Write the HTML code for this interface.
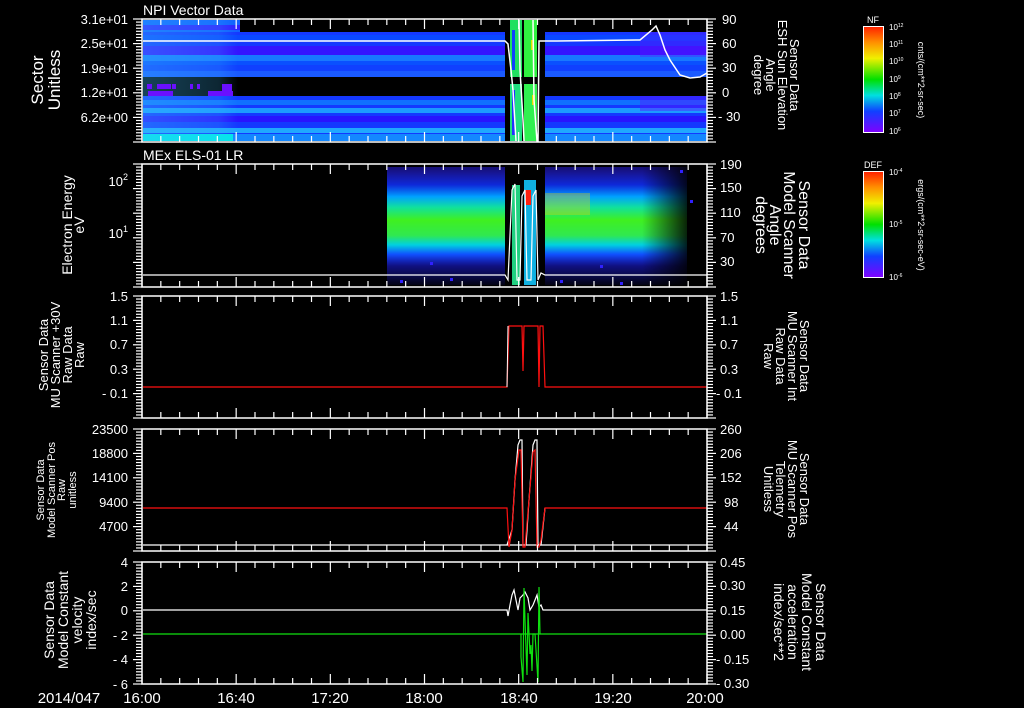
<!DOCTYPE html>
<html><head><meta charset="utf-8"><style>
html,body{margin:0;padding:0;background:#000;}
svg{display:block}
text{font-family:"Liberation Sans",sans-serif;fill:#fff;}
</style></head><body>
<svg width="1024" height="708" viewBox="0 0 1024 708" xmlns="http://www.w3.org/2000/svg">
<defs>
<linearGradient id="nf" x1="0" y1="0" x2="0" y2="1">
<stop offset="0" stop-color="#ff2000"/><stop offset="0.15" stop-color="#ff9000"/><stop offset="0.3" stop-color="#f0f000"/><stop offset="0.5" stop-color="#00e000"/><stop offset="0.65" stop-color="#00e0e0"/><stop offset="0.8" stop-color="#1040ff"/><stop offset="1" stop-color="#8000ff"/>
</linearGradient>
<linearGradient id="els" x1="0" y1="0" x2="0" y2="1">
<stop offset="0" stop-color="#3020ff" stop-opacity="0.45"/><stop offset="0.15" stop-color="#1030ff" stop-opacity="0.85"/><stop offset="0.25" stop-color="#00a0ff"/><stop offset="0.34" stop-color="#10e0a0"/><stop offset="0.45" stop-color="#40f020"/><stop offset="0.58" stop-color="#30e850"/><stop offset="0.66" stop-color="#00d0e0"/><stop offset="0.74" stop-color="#1050ff"/><stop offset="0.84" stop-color="#2020ff" stop-opacity="0.5"/><stop offset="1" stop-color="#2020ff" stop-opacity="0.08"/>
</linearGradient>
<linearGradient id="fadeR" x1="0" y1="0" x2="1" y2="0">
<stop offset="0" stop-color="#000" stop-opacity="0"/><stop offset="0.85" stop-color="#000" stop-opacity="0"/><stop offset="1" stop-color="#000" stop-opacity="0.85"/>
</linearGradient>
<linearGradient id="leftlite" x1="0" y1="0" x2="1" y2="0">
<stop offset="0" stop-color="#40c0ff" stop-opacity="0.35"/><stop offset="0.8" stop-color="#40c0ff" stop-opacity="0.2"/><stop offset="1" stop-color="#40c0ff" stop-opacity="0"/>
</linearGradient>
</defs>

<!-- PANEL 1 data -->
<g>
<rect x="143" y="20" width="97" height="12" fill="#1060ff"/>
<rect x="143" y="25" width="97" height="5" fill="#3020ff"/>
<rect x="143" y="32" width="564" height="45" fill="#1438ff"/>
<rect x="143" y="35" width="564" height="6" fill="#0a48ff"/>
<rect x="143" y="46" width="564" height="9" fill="#3414ff"/>
<rect x="143" y="55" width="564" height="6" fill="#1878ff"/>
<rect x="143" y="61" width="564" height="4" fill="#0a50ff"/>
<rect x="143" y="65" width="564" height="6" fill="#1040ff"/>
<rect x="143" y="71" width="564" height="6" fill="#1a5aff"/>
<rect x="143" y="96" width="564" height="45" fill="#1438ff"/>
<rect x="143" y="100" width="564" height="5" fill="#1070ff"/>
<rect x="143" y="108" width="564" height="5" fill="#1c9aff"/>
<rect x="143" y="116" width="564" height="6" fill="#2814ff"/>
<rect x="143" y="128" width="564" height="5" fill="#20a8ff"/>
<rect x="143" y="134" width="564" height="7" fill="#1488ff"/>
<rect x="143" y="134" width="90" height="7" fill="#00e8e8"/>
<rect x="143" y="20" width="95" height="121" fill="url(#leftlite)"/>
<rect x="640" y="32" width="67" height="25" fill="#6010ff" opacity="0.35"/>
<rect x="640" y="96" width="67" height="15" fill="#6010ff" opacity="0.4"/>
<g fill="#6a10ff"><rect x="147" y="84" width="5" height="5"/><rect x="157" y="84" width="14" height="5"/><rect x="172" y="84" width="4" height="5"/><rect x="190" y="84" width="3" height="5"/><rect x="197" y="84" width="3" height="5"/><rect x="222" y="84" width="10" height="12"/><rect x="148" y="91" width="25" height="5"/><rect x="208" y="91" width="25" height="5"/></g>
<!-- gap/columns -->
<rect x="505" y="20" width="40" height="121" fill="#000"/>
<rect x="510" y="20" width="12" height="57" fill="#20e060"/>
<rect x="524" y="20" width="13" height="57" fill="#30f040"/>
<rect x="510" y="84" width="12" height="57" fill="#20e080"/>
<rect x="524" y="84" width="13" height="57" fill="#30f050"/>
<rect x="512" y="30" width="3" height="40" fill="#1040ff"/><rect x="512" y="90" width="3" height="45" fill="#2030ff"/>
<rect x="531" y="40" width="3" height="10" fill="#e0e000"/><rect x="532" y="95" width="3" height="10" fill="#e0e000"/>
<polyline points="143,41 505,41 508,44 511,70 513,90 516,141" fill="none" stroke="#fff" stroke-width="1.5"/>
<polyline points="519,20 520,70 523,120 524,141" fill="none" stroke="#fff" stroke-width="1.5"/>
<polyline points="533,20 534,100 537,141 538,141 539,41 557,41 640,40 652,30 656,26 660,35 665,50 670,60 680,75 690,78 700,77 707,73" fill="none" stroke="#fff" stroke-width="1.5"/>
</g>

<!-- PANEL 2 data -->
<rect x="387" y="167" width="300" height="118" fill="url(#els)"/>
<rect x="387" y="167" width="300" height="118" fill="url(#fadeR)"/>
<rect x="545" y="193" width="45" height="22" fill="#e8d000" opacity="0.35"/>
<rect x="505" y="165" width="40" height="122" fill="#000"/>
<rect x="512" y="185" width="8" height="100" fill="#20d080"/>
<rect x="524" y="180" width="12" height="105" fill="#10b0e0"/>
<rect x="525" y="190" width="6" height="15" fill="#ff2010"/>
<polyline points="143,275 505,275 508,280 512,190 515,184 517,280 520,280 522,196 525,190 527,280 531,280 533,196 536,190 538,280 541,273 545,275 707,275" fill="none" stroke="#fff" stroke-width="1.2"/>
<g fill="#3020ff"><rect x="400" y="280" width="3" height="3"/><rect x="450" y="278" width="3" height="3"/><rect x="560" y="280" width="3" height="3"/><rect x="620" y="282" width="3" height="3"/><rect x="680" y="170" width="3" height="3"/><rect x="690" y="200" width="3" height="3"/><rect x="430" y="262" width="3" height="3"/><rect x="600" y="265" width="3" height="3"/></g>

<!-- PANEL 3 -->
<polyline points="143,387 507,387 509,326 522,326 523,371 524,326 538,326 539,387 540,326 543,326 545,387 707,387" fill="none" stroke="#ff1010" stroke-width="1.2"/>
<polyline points="507,387 508,326" stroke="#fff" fill="none"/>

<!-- PANEL 4 -->
<line x1="143" y1="545" x2="707" y2="545" stroke="#fff" stroke-width="1.2"/>
<polyline points="507,545 512,530 515,480 518,445 520,440 522,440 523,545 526,545 529,500 533,445 535,440 537,440 538,545 541,545 545,508" fill="none" stroke="#fff" stroke-width="1.2"/>
<polyline points="143,508 507,508 509,547 512,530 515,480 519,450 521,450 523,547 525,547 529,500 533,452 535,450 537,547 539,547 541,540 545,508 707,508" fill="none" stroke="#ff1010" stroke-width="1.2"/>

<!-- PANEL 5 -->
<polyline points="143,610 507,610 508,616 510,605 512,595 514,590 516,600 518,610 520,598 523,595 525,592 528,598 530,610 533,605 535,600 537,595 539,607 541,605 543,610 707,610" fill="none" stroke="#fff" stroke-width="1.2"/>
<line x1="143" y1="634" x2="707" y2="634" stroke="#10e010" stroke-width="1.2"/>
<polyline points="521,634 521,657 523,682 524,588 525,620 527,675 528,613 530,654 531,645 532,671 533,634 535,634 538,682 539,587 540,634" fill="none" stroke="#10e010" stroke-width="1.2"/>

<g fill="none" stroke="#fff" stroke-width="1.5">
<rect x="142" y="19" width="565" height="123"/>
<rect x="142" y="164" width="565" height="123"/>
<rect x="142" y="296" width="565" height="122"/>
<rect x="142" y="429" width="565" height="122"/>
<rect x="142" y="562" width="565" height="122"/>
</g>
<g stroke="#fff" stroke-width="1.2" id="tk"></g>

<g font-size="14">
<text x="143" y="15">NPI Vector Data</text>
<text x="143" y="160">MEx ELS-01 LR</text>
</g>
<g font-size="13" text-anchor="end">
<text x="128" y="24">3.1e+01</text><text x="128" y="48">2.5e+01</text><text x="128" y="73">1.9e+01</text><text x="128" y="97">1.2e+01</text><text x="128" y="122">6.2e+00</text>
<text x="128" y="186">10<tspan font-size="9" dy="-6">2</tspan></text><text x="128" y="238">10<tspan font-size="9" dy="-6">1</tspan></text>
<text x="128" y="301">1.5</text><text x="128" y="325">1.1</text><text x="128" y="349">0.7</text><text x="128" y="374">0.3</text><text x="128" y="398">- 0.1</text>
<text x="128" y="434">23500</text><text x="128" y="458">18800</text><text x="128" y="482">14100</text><text x="128" y="507">9400</text><text x="128" y="531">4700</text>
<text x="128" y="567">4</text><text x="128" y="591">2</text><text x="128" y="615">0</text><text x="128" y="640">- 2</text><text x="128" y="664">- 4</text><text x="128" y="689">- 6</text>
</g>
<g font-size="13">
<text x="722" y="24">90</text><text x="722" y="48">60</text><text x="722" y="72">30</text><text x="722" y="97">0</text><text x="718" y="121">- 30</text>
<text x="720" y="169">190</text><text x="720" y="192">150</text><text x="720" y="217">110</text><text x="720" y="242">70</text><text x="720" y="266">30</text>
<text x="720" y="301">1.5</text><text x="720" y="325">1.1</text><text x="720" y="349">0.7</text><text x="720" y="374">0.3</text><text x="716" y="398">- 0.1</text>
<text x="720" y="434">260</text><text x="720" y="458">206</text><text x="720" y="482">152</text><text x="724" y="507">98</text><text x="724" y="531">44</text>
<text x="720" y="567">0.45</text><text x="720" y="590">0.30</text><text x="720" y="615">0.15</text><text x="720" y="639">0.00</text><text x="716" y="664">- 0.15</text><text x="716" y="688">- 0.30</text>
</g>
<g font-size="15" text-anchor="middle">
<text x="69" y="703">2014/047</text>
<text x="142" y="703">16:00</text><text x="236" y="703">16:40</text><text x="330" y="703">17:20</text><text x="424" y="703">18:00</text><text x="519" y="703">18:40</text><text x="613" y="703">19:20</text><text x="705" y="703">20:00</text>
</g>
<g text-anchor="middle">
<text font-size="17" transform="translate(43,80) rotate(-90)">Sector</text>
<text font-size="17" transform="translate(60,80) rotate(-90)">Unitless</text>
<text font-size="14" transform="translate(72,225) rotate(-90)">Electron Energy</text>
<text font-size="14" transform="translate(84,225) rotate(-90)">eV</text>
<text font-size="13" transform="translate(48,355) rotate(-90)">Sensor Data</text>
<text font-size="13" transform="translate(60,355) rotate(-90)">MU Scanner +30V</text>
<text font-size="13" transform="translate(72,355) rotate(-90)">Raw Data</text>
<text font-size="13" transform="translate(84,355) rotate(-90)">Raw</text>
<text font-size="11" transform="translate(44,490) rotate(-90)">Sensor Data</text>
<text font-size="11" transform="translate(55,490) rotate(-90)">Model Scanner Pos</text>
<text font-size="11" transform="translate(65,490) rotate(-90)">Raw</text>
<text font-size="11" transform="translate(76,490) rotate(-90)">unitless</text>
<text font-size="14" transform="translate(54,620) rotate(-90)">Sensor Data</text>
<text font-size="14" transform="translate(68,620) rotate(-90)">Model Constant</text>
<text font-size="14" transform="translate(82,620) rotate(-90)">velocity</text>
<text font-size="14" transform="translate(96,620) rotate(-90)">index/sec</text>
</g>
<g text-anchor="middle">
<g font-size="13">
<text transform="translate(790,75) rotate(90)">Sensor Data</text>
<text transform="translate(778,75) rotate(90)">ESH Sun Elevation</text>
<text transform="translate(766,75) rotate(90)">Angle</text>
<text transform="translate(754,75) rotate(90)">degree</text>
</g>
<g font-size="16">
<text transform="translate(799,225) rotate(90)">Sensor Data</text>
<text transform="translate(784,225) rotate(90)">Model Scanner</text>
<text transform="translate(770,225) rotate(90)">Angle</text>
<text transform="translate(756,225) rotate(90)">degrees</text>
</g>
<g font-size="13" style="fill:#ff1010">
<text transform="translate(800,356) rotate(90)">Sensor Data</text>
<text transform="translate(788,356) rotate(90)">MU Scanner Int</text>
<text transform="translate(776,356) rotate(90)">Raw Data</text>
<text transform="translate(764,356) rotate(90)">Raw</text>
</g>
<g font-size="13" style="fill:#ff1010">
<text transform="translate(800,489) rotate(90)">Sensor Data</text>
<text transform="translate(788,489) rotate(90)">MU Scanner Pos</text>
<text transform="translate(776,489) rotate(90)">Telemetry</text>
<text transform="translate(764,489) rotate(90)">Unitless</text>
</g>
<g font-size="14" style="fill:#10e010">
<text transform="translate(816,622) rotate(90)">Sensor Data</text>
<text transform="translate(802,622) rotate(90)">Model Constant</text>
<text transform="translate(788,622) rotate(90)">acceleration</text>
<text transform="translate(774,622) rotate(90)">index/sec**2</text>
</g>
</g>
<rect x="863.5" y="26.5" width="20" height="106" fill="url(#nf)" stroke="#fff"/>
<rect x="863.5" y="171.5" width="20" height="106" fill="url(#nf)" stroke="#fff"/>
<text x="867" y="23" font-size="9">NF</text>
<text x="864" y="168" font-size="9">DEF</text>
<g font-size="8">
<text x="889" y="30">10<tspan font-size="5" dy="-3">12</tspan></text>
<text x="889" y="47">10<tspan font-size="5" dy="-3">11</tspan></text>
<text x="889" y="64">10<tspan font-size="5" dy="-3">10</tspan></text>
<text x="889" y="82">10<tspan font-size="5" dy="-3">9</tspan></text>
<text x="889" y="99">10<tspan font-size="5" dy="-3">8</tspan></text>
<text x="889" y="116">10<tspan font-size="5" dy="-3">7</tspan></text>
<text x="889" y="134">10<tspan font-size="5" dy="-3">6</tspan></text>
<text x="889" y="175">10<tspan font-size="5" dy="-3">-4</tspan></text>
<text x="889" y="227">10<tspan font-size="5" dy="-3">-5</tspan></text>
<text x="889" y="280">10<tspan font-size="5" dy="-3">-6</tspan></text>
</g>
<g font-size="9" text-anchor="middle">
<text transform="translate(918,80) rotate(90)">cnts/(cm**2-sr-sec)</text>
<text transform="translate(918,225) rotate(90)">ergs/(cm**2-sr-sec-eV)</text>
</g>
</svg>
<script>
(function(){
var g=document.getElementById('tk'),s='';
var P=[[19,142],[164,287],[296,418],[429,551],[562,684]];
P.forEach(function(p){
 for(var i=0;i<=30;i++){var x=142+i*565/30;var L=(i%5==0)?10:6;
  s+='<line x1="'+x+'" y1="'+p[0]+'" x2="'+x+'" y2="'+(p[0]+L)+'"/>';
  s+='<line x1="'+x+'" y1="'+p[1]+'" x2="'+x+'" y2="'+(p[1]-L)+'"/>';}
 var h=p[1]-p[0];
 for(var j=0;j<=40;j++){var y=p[0]+j*h/40;var L=(j%8==0)?9:6;
  s+='<line x1="'+(142-L)+'" y1="'+y+'" x2="142" y2="'+y+'"/>';
  s+='<line x1="707" y1="'+y+'" x2="'+(707+L)+'" y2="'+y+'"/>';}
});
g.innerHTML=s;
})();
</script>
</body></html>
